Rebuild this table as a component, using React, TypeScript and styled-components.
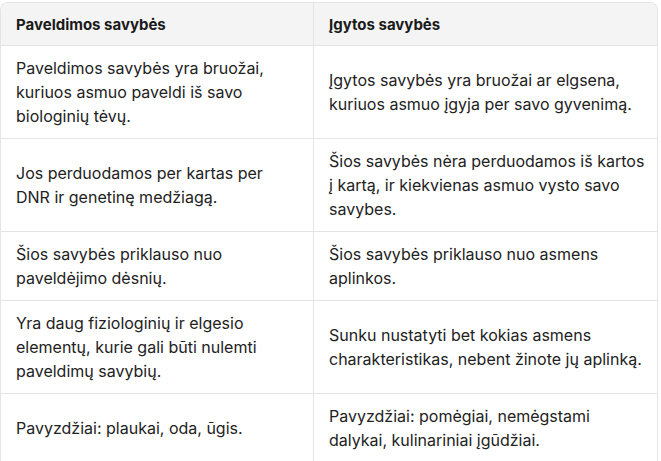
import React from "react";
import styled, { createGlobalStyle } from "styled-components";

const Global = createGlobalStyle`
  html, body { margin: 0; padding: 0; background: #ffffff; }
  body { font-family: Inter, "Noto Sans", sans-serif; color: #1f1f1f; }
`;

const Wrap = styled.div`
  padding: 2px 3px 0 0;
`;

const Table = styled.table`
  width: 658px;
  border-collapse: separate;
  border-spacing: 0;
  border: 1px solid #e4e4e4;
  border-bottom: none;
  border-radius: 8px 8px 0 0;
  overflow: hidden;
  table-layout: fixed;
`;

const Th = styled.th<{ $last?: boolean }>`
  background: #f4f4f4;
  text-align: left;
  font-weight: 700;
  font-size: 15px;
  line-height: 20px;
  padding: 12px ${(p) => (p.$last ? "8px" : "16px")} 10px 15px;
  border-bottom: 1px solid #e4e4e4;
  border-right: ${(p) => (p.$last ? "none" : "1px solid #e4e4e4")};
  color: #1a1a1a;
`;

const Td = styled.td<{ $last?: boolean; $lastRow?: boolean }>`
  font-size: 16px;
  line-height: 24px;
  padding: 10px ${(p) => (p.$last ? "8px" : "16px")} 10px 15px;
  vertical-align: middle;
  border-bottom: ${(p) => (p.$lastRow ? "none" : "1px solid #e4e4e4")};
  border-right: ${(p) => (p.$last ? "none" : "1px solid #e4e4e4")};
  color: #222222;
`;

const rows: [string, string][] = [
  [
    "Paveldimos savybės yra bruožai, kuriuos asmuo paveldi iš savo biologinių tėvų.",
    "Įgytos savybės yra bruožai ar elgsena, kuriuos asmuo įgyja per savo gyvenimą.",
  ],
  [
    "Jos perduodamos per kartas per DNR ir genetinę medžiagą.",
    "Šios savybės nėra perduodamos iš kartos į kartą, ir kiekvienas asmuo vysto savo savybes.",
  ],
  [
    "Šios savybės priklauso nuo paveldėjimo dėsnių.",
    "Šios savybės priklauso nuo asmens aplinkos.",
  ],
  [
    "Yra daug fiziologinių ir elgesio elementų, kurie gali būti nulemti paveldimų savybių.",
    "Sunku nustatyti bet kokias asmens charakteristikas, nebent žinote jų aplinką.",
  ],
  [
    "Pavyzdžiai: plaukai, oda, ūgis.",
    "Pavyzdžiai: pomėgiai, nemėgstami dalykai, kulinariniai įgūdžiai.",
  ],
];

export default function App() {
  return (
    <>
      <Global />
      <Wrap>
        <Table>
          <colgroup>
            <col style={{ width: 313 }} />
            <col />
          </colgroup>
          <thead>
            <tr>
              <Th>Paveldimos savybės</Th>
              <Th $last>Įgytos savybės</Th>
            </tr>
          </thead>
          <tbody>
            {rows.map((r, i) => (
              <tr key={i}>
                <Td $lastRow={i === rows.length - 1}>{r[0]}</Td>
                <Td $last $lastRow={i === rows.length - 1}>{r[1]}</Td>
              </tr>
            ))}
          </tbody>
        </Table>
      </Wrap>
    </>
  );
}
